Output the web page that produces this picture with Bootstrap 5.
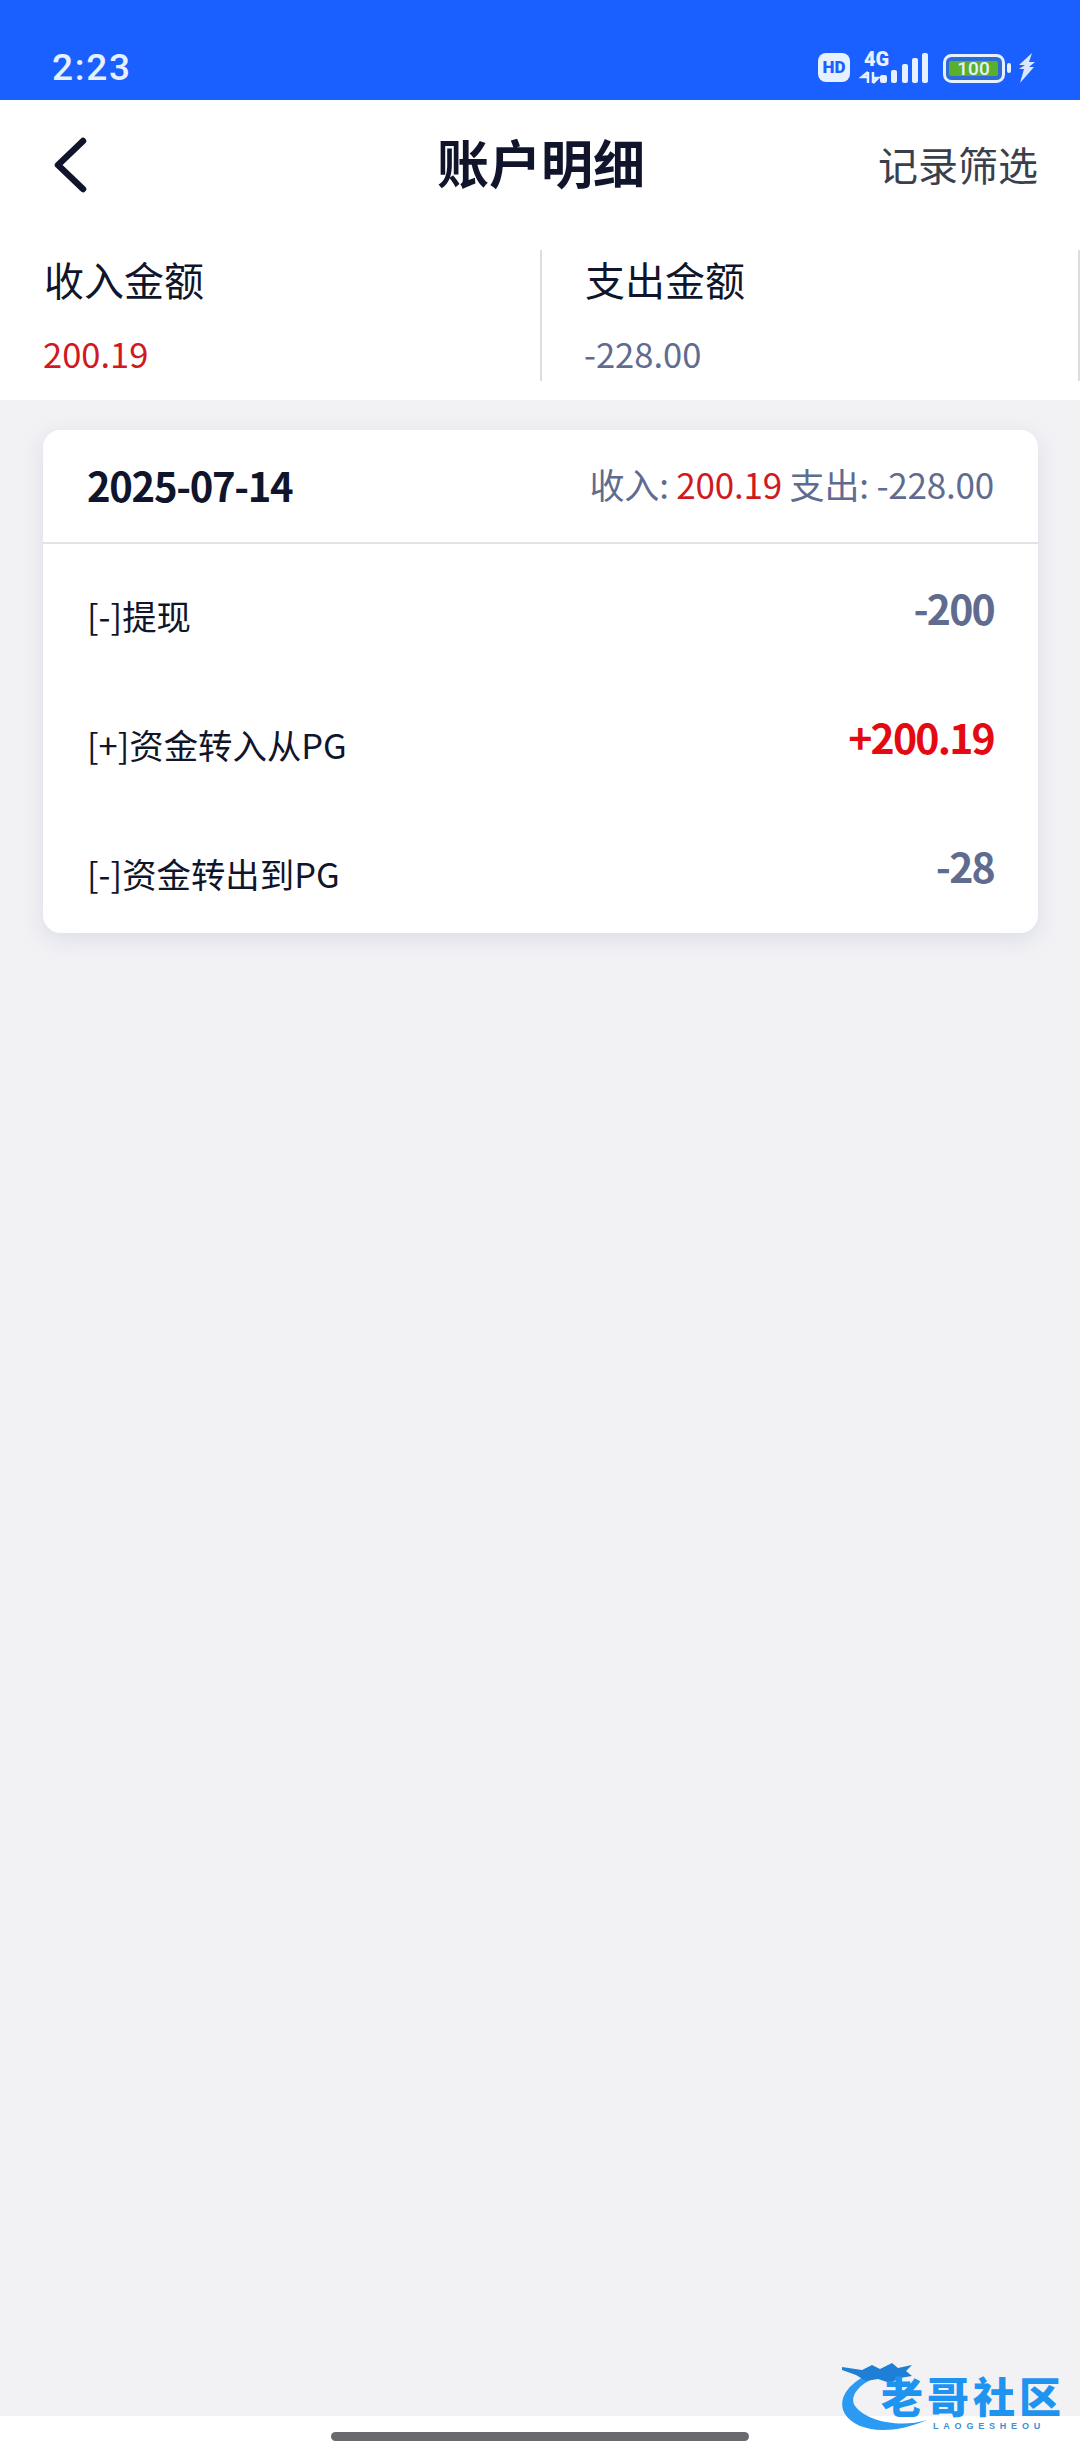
<!DOCTYPE html>
<html lang="zh-CN">
<head>
  <meta charset="UTF-8">
  <meta name="viewport" content="width=device-width, initial-scale=1.0">
  <title>账户明细</title>
  <link href="https://cdn.jsdelivr.net/npm/bootstrap@5.3.0/dist/css/bootstrap.min.css" rel="stylesheet">
  <style>
    body {
      width: 1080px;
      height: 2460px;
      overflow: hidden;
      background: #f2f2f5;
      color: #10152b;
      font-family: "Noto Sans CJK SC", "Noto Sans", sans-serif;
    }
    .page-wrap { height: 2460px; }
    .status-strip { height: 100px; background: #1a5fff; padding: 30px 42px 0 52px; color: #e6f0ff; }
    .status-time { font-family: Roboto, sans-serif; font-size: 37px; font-weight: 500; line-height: 40px; letter-spacing: 1.700px; margin-top: 18px; }
    .status-icons { margin-top: 4px; }
    .top-bar { height: 130px; padding: 0 42px 0 52px; }
    .page-title { font-size: 52px; font-weight: 700; line-height: 1; margin-top: -3px; margin-left: 1px; }
    .filter-link { font-size: 40px; color: #3a3f4d; line-height: 1; margin-top: -3px; }
    .summary-strip { height: 170px; padding-top: 20px; }
    .summary-cell { height: 131px; padding-left: 44px; border-right: 2px solid #dcdde1; }
    .summary-cell:first-child { width: 542px; }
    .summary-cell:last-child { width: 538px; padding-left: 43px; }
    .summary-label { font-size: 40px; line-height: 1; margin-top: 9px; }
    .summary-value { font-size: 34.500px; line-height: 1; margin-top: 37px; margin-left: -1px; }
    .tone-red { color: #d01a1f; }
    .tone-slate { color: #5f6c90; }
    .detail-card { margin: 30px 42px 0 43px; height: 503px; border: 0; border-radius: 18px; box-shadow: 0 6px 22px rgba(160, 170, 195, .28); }
    .detail-head { height: 114px; padding: 0 44px; background: #fff; border-bottom: 2px solid #e2e3e7; }
    .detail-date { font-size: 40px; font-weight: 600; letter-spacing: -1.300px; margin-top: -3px; }
    .detail-sum { font-size: 35px; letter-spacing: -.2px; margin-top: -3px; }
    .detail-row { height: 129px; padding: 0 44px; }
    .row-name { font-size: 34.400px; line-height: 1; margin-top: 13px; }
    .row-amount { font-size: 41px; font-weight: 700; line-height: 1; letter-spacing: -1.800px; margin-top: -3px; }
    .tone-hot { color: #e50a12; }
    .footer-strip { position: absolute; left: 0; right: 0; bottom: 0; height: 44px; background: #fff; }
    .home-pill { width: 418px; height: 9px; border-radius: 5px; background: #6a6a6e; margin: 16px auto 0; }
    .brand-mark { position: absolute; left: 835px; top: 2360px; width: 240px; height: 90px; }
    .brand-name { position: absolute; left: 46px; top: 16px; white-space: nowrap; font-size: 42px; font-weight: 900; line-height: 38px; letter-spacing: 4px; color: #1f93f0; }
    .brand-latin { position: absolute; left: 98px; top: 60px; font-family: "Liberation Sans", sans-serif; font-size: 9px; font-weight: 700; letter-spacing: 4.800px; color: #3c8fd8; line-height: 12px; white-space: nowrap; }
  </style>
</head>
<body>
  <div class="page-wrap position-relative">
    <div class="status-strip d-flex justify-content-between align-items-start">
      <div class="status-time">2:23</div>
      <svg class="status-icons" width="220" height="52" viewBox="0 0 220 52">
        <rect x="0" y="19" width="32" height="29" rx="8" fill="#e6f0ff"/>
        <text x="16" y="39" text-anchor="middle" font-family="Roboto, sans-serif" font-weight="900" font-size="17" fill="#1a5fff">HD</text>
        <text x="46" y="32" font-family="Roboto, sans-serif" font-weight="900" font-size="20" fill="#e6f0ff">4G</text>
        <path d="M50 38v11M50 43h-6l6-5M55 49V38M55 44h5l-5 5" stroke="#e6f0ff" stroke-width="2.500" fill="none"/>
        <rect x="62" y="41" width="7" height="8" rx="2" fill="#e6f0ff"/>
        <rect x="73" y="36" width="6" height="13" rx="2" fill="#e6f0ff"/>
        <rect x="84" y="30" width="6" height="19" rx="2" fill="#e6f0ff"/>
        <rect x="94" y="24" width="6" height="25" rx="2" fill="#e6f0ff"/>
        <rect x="104" y="19" width="6" height="30" rx="2" fill="#e6f0ff"/>
        <rect x="126.500" y="21.500" width="59" height="26" rx="7" fill="#2d6bd6" stroke="#e6f0ff" stroke-width="3"/>
        <rect x="131" y="27" width="49" height="15" rx="2" fill="#5ab02c"/>
        <text x="155.500" y="41" text-anchor="middle" font-family="Roboto, sans-serif" font-weight="500" font-size="19" fill="#e6f0ff">100</text>
        <rect x="189" y="29" width="4" height="10" rx="2" fill="#e6f0ff"/>
        <path d="M214 19l-13 12h6l-6 4h5l-4 14 14-16h-5l6-5h-6z" fill="#dbe7ff"/>
      </svg>
    </div>

    <div class="bg-white">
      <div class="top-bar d-flex justify-content-between align-items-center position-relative">
        <svg width="38" height="56" viewBox="0 0 38 56" fill="none" stroke="#10152b" stroke-width="6.500" stroke-linecap="round" stroke-linejoin="round">
          <path d="M31 4L6 28l25 24"/>
        </svg>
        <div class="page-title position-absolute top-50 start-50 translate-middle">账户明细</div>
        <div class="filter-link">记录筛选</div>
      </div>
      <div class="summary-strip d-flex">
        <div class="summary-cell">
          <div class="summary-label">收入金额</div>
          <div class="summary-value tone-red">200.19</div>
        </div>
        <div class="summary-cell">
          <div class="summary-label">支出金额</div>
          <div class="summary-value tone-slate">-228.00</div>
        </div>
      </div>
    </div>

    <div class="card detail-card overflow-hidden">
      <div class="detail-head d-flex justify-content-between align-items-center">
        <div class="detail-date">2025-07-14</div>
        <div class="detail-sum tone-slate">收入: <span class="tone-red">200.19</span> 支出: -228.00</div>
      </div>
      <div class="detail-row d-flex justify-content-between align-items-center">
        <div class="row-name">[-]提现</div>
        <div class="row-amount tone-slate">-200</div>
      </div>
      <div class="detail-row d-flex justify-content-between align-items-center">
        <div class="row-name">[+]资金转入从PG</div>
        <div class="row-amount tone-hot">+200.19</div>
      </div>
      <div class="detail-row d-flex justify-content-between align-items-center">
        <div class="row-name">[-]资金转出到PG</div>
        <div class="row-amount tone-slate">-28</div>
      </div>
    </div>

    <div class="footer-strip">
      <div class="home-pill"></div>
    </div>

    <div class="brand-mark">
      <svg class="position-absolute top-0 start-0" width="110" height="80" viewBox="0 0 110 80">
        <path d="M34 14C12 24 2 40 10 54c9 15 40 24 82 6C66 68 32 62 20 46 14 36 24 24 42 17z" fill="#2a9af2"/>
        <path d="M7 7l20 3 10-5 8 4 12-6 6 5 14-3-6 6 6 5-12 2-10 5-12-4-12 2-10-6-14-5z" fill="#1f7fd6"/>
      </svg>
      <div class="brand-name">老哥社区</div>
      <div class="brand-latin">LAOGESHEOU</div>
    </div>
  </div>
  <script src="https://cdn.jsdelivr.net/npm/bootstrap@5.3.0/dist/js/bootstrap.bundle.min.js"></script>
</body>
</html>
